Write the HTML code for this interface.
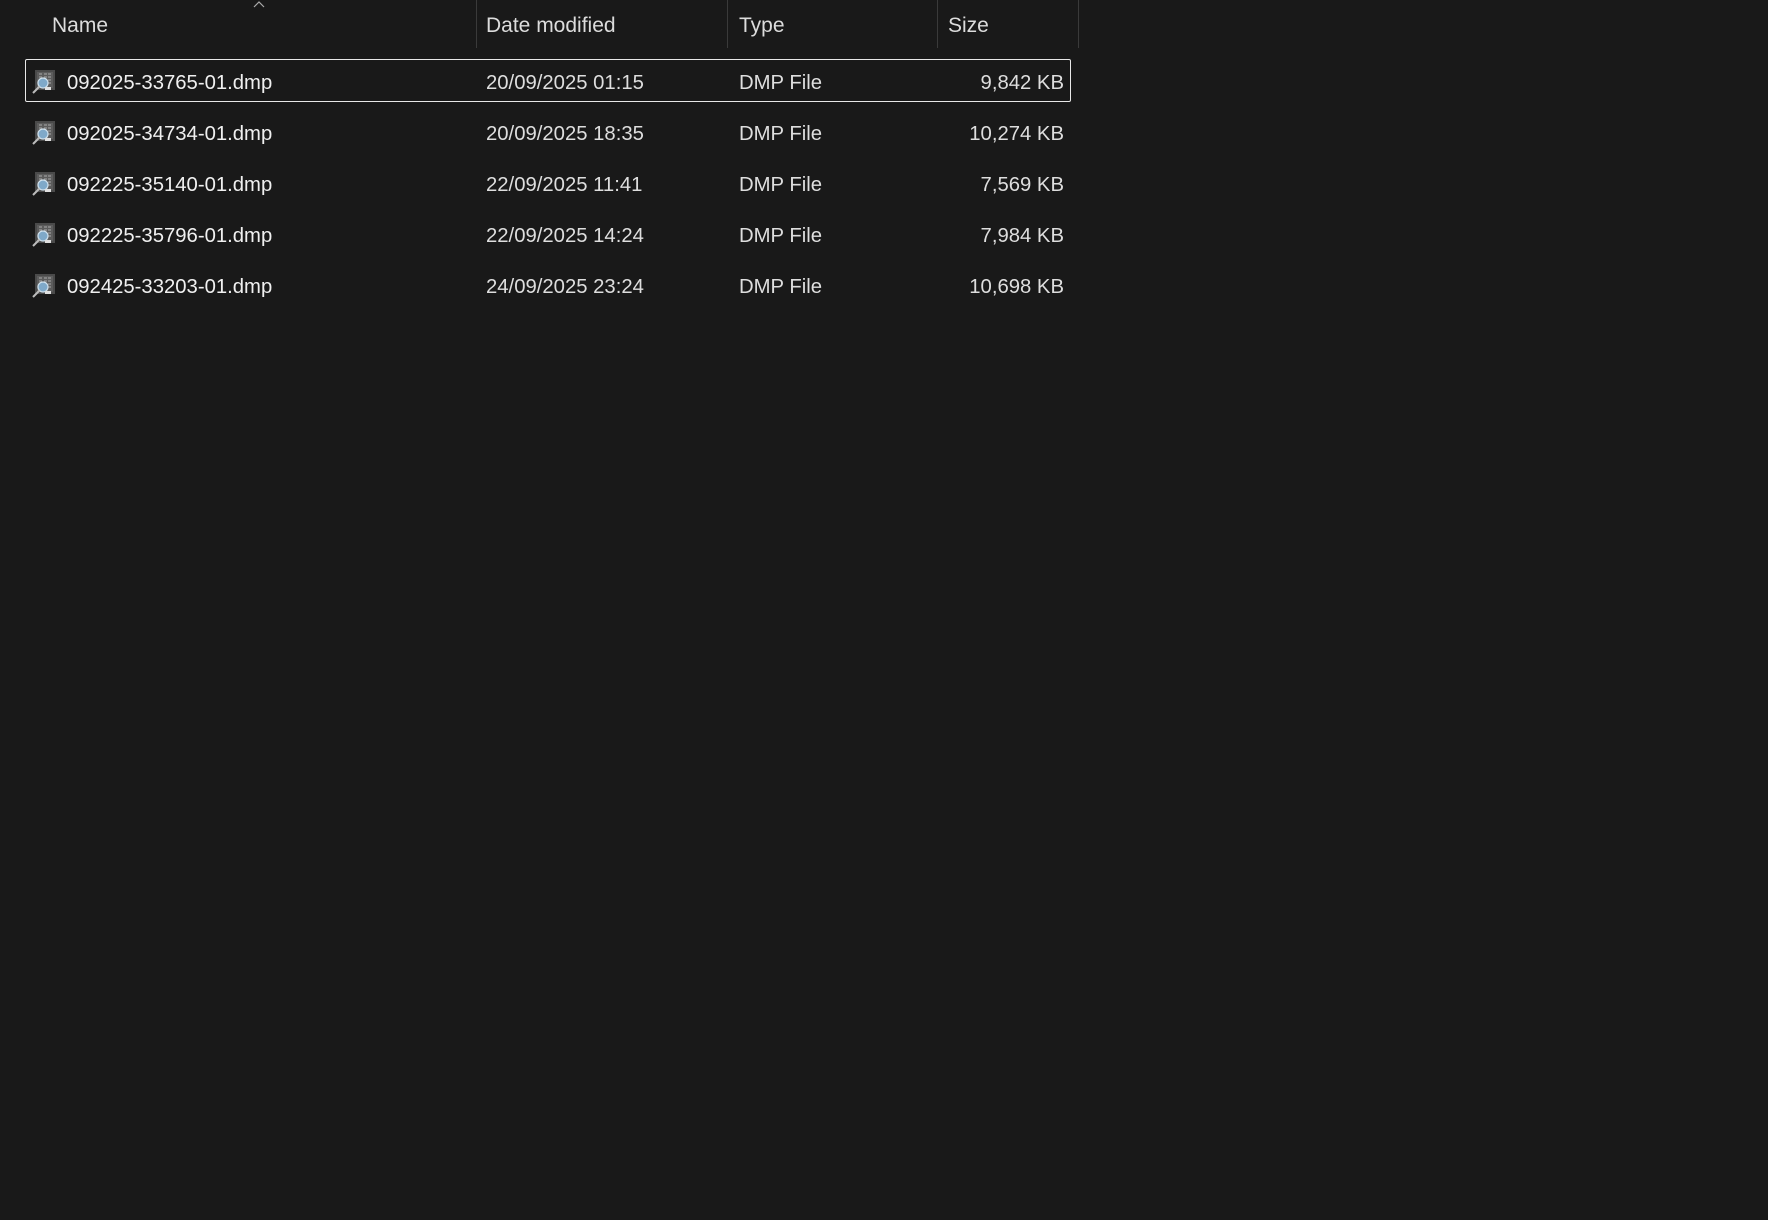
<!DOCTYPE html>
<html><head><meta charset="utf-8"><style>
html,body{margin:0;padding:0;background:#191919;width:1768px;height:1220px;overflow:hidden;font-family:"Liberation Sans",sans-serif;}
.t{position:absolute;white-space:nowrap;font-size:20.3px;color:#f0f0f0;line-height:1;}
.h{color:#dcdcdc;font-size:21px;}
.sep{position:absolute;top:0;width:1px;height:48px;background:#3a3a3a;}
.sel{position:absolute;left:25px;top:59px;width:1044px;height:41px;border:1px solid #e8e8e8;border-radius:2px;}
.ic{position:absolute;width:26px;height:26px;}
.r{text-align:right;}
</style></head><body>
<svg style="position:absolute;left:252px;top:0" width="14" height="10"><path d="M2 7 L7 2 L12 7" fill="none" stroke="#aaa" stroke-width="1.2"/></svg>
<div class="t h" style="left:52px;top:15px">Name</div>
<div class="sep" style="left:476px"></div>
<div class="t h" style="left:486px;top:15px">Date modified</div>
<div class="sep" style="left:727px"></div>
<div class="t h" style="left:739px;top:15px">Type</div>
<div class="sep" style="left:937px"></div>
<div class="t h" style="left:948px;top:15px">Size</div>
<div class="sep" style="left:1078px"></div>
<div class="sel"></div>

<svg width="0" height="0" style="position:absolute"><defs><g id="ico"><rect x="4" y="1" width="20" height="20" fill="#4a4a4a"/><rect x="6" y="3" width="16" height="16" fill="#5c5c5c"/><path d="M8 5h3M13 5h3M17 5h3M8 8h3M13 8h3M17 8h3M8 11h3M17 11h3M8 14h3M17 14h3" stroke="#9a9a9a" stroke-width="1.2"/><circle cx="12" cy="14" r="5" fill="#7fa9c9" stroke="#cfe0ec" stroke-width="1.2"/><path d="M8.5 17.5 L2 24" stroke="#bbb" stroke-width="2"/><rect x="14" y="18" width="6" height="3" fill="#e0e0e0"/></g></defs></svg>

<svg class="ic" style="left:31px;top:69px" viewBox="0 0 26 26"><use href="#ico"/></svg>
<div class="t" style="left:67px;top:73px">092025-33765-01.dmp</div>
<div class="t" style="left:486px;top:73px;color:#dedede">20/09/2025 01:15</div>
<div class="t" style="left:739px;top:73px;color:#dedede">DMP File</div>
<div class="t r" style="right:704px;top:73px;color:#dedede">9,842 KB</div>

<svg class="ic" style="left:31px;top:120px" viewBox="0 0 26 26"><use href="#ico"/></svg>
<div class="t" style="left:67px;top:124px">092025-34734-01.dmp</div>
<div class="t" style="left:486px;top:124px;color:#dedede">20/09/2025 18:35</div>
<div class="t" style="left:739px;top:124px;color:#dedede">DMP File</div>
<div class="t r" style="right:704px;top:124px;color:#dedede">10,274 KB</div>

<svg class="ic" style="left:31px;top:171px" viewBox="0 0 26 26"><use href="#ico"/></svg>
<div class="t" style="left:67px;top:175px">092225-35140-01.dmp</div>
<div class="t" style="left:486px;top:175px;color:#dedede">22/09/2025 11:41</div>
<div class="t" style="left:739px;top:175px;color:#dedede">DMP File</div>
<div class="t r" style="right:704px;top:175px;color:#dedede">7,569 KB</div>

<svg class="ic" style="left:31px;top:222px" viewBox="0 0 26 26"><use href="#ico"/></svg>
<div class="t" style="left:67px;top:226px">092225-35796-01.dmp</div>
<div class="t" style="left:486px;top:226px;color:#dedede">22/09/2025 14:24</div>
<div class="t" style="left:739px;top:226px;color:#dedede">DMP File</div>
<div class="t r" style="right:704px;top:226px;color:#dedede">7,984 KB</div>

<svg class="ic" style="left:31px;top:273px" viewBox="0 0 26 26"><use href="#ico"/></svg>
<div class="t" style="left:67px;top:277px">092425-33203-01.dmp</div>
<div class="t" style="left:486px;top:277px;color:#dedede">24/09/2025 23:24</div>
<div class="t" style="left:739px;top:277px;color:#dedede">DMP File</div>
<div class="t r" style="right:704px;top:277px;color:#dedede">10,698 KB</div>
</body></html>
